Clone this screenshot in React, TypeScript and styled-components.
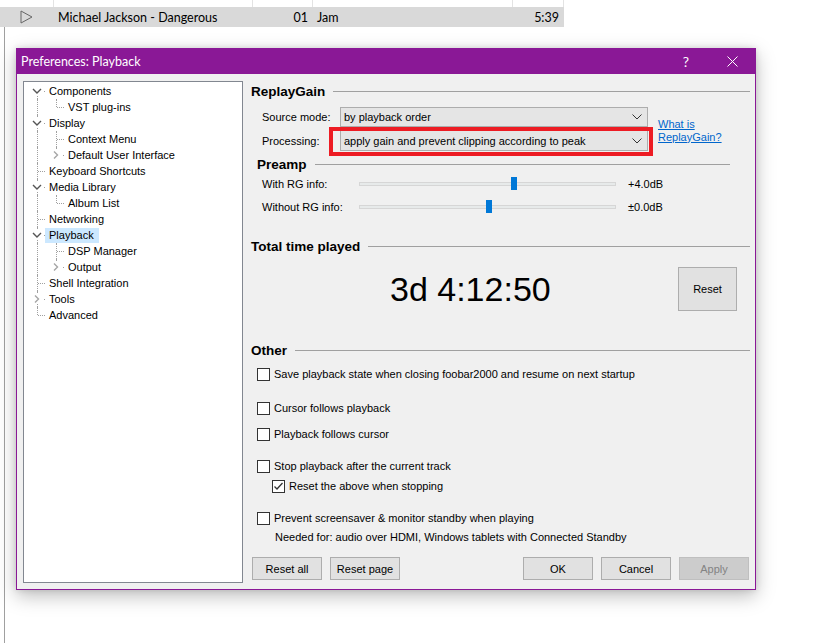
import React from "react";
import styled, { createGlobalStyle } from "styled-components";

const GlobalStyle = createGlobalStyle`
  html, body {
    margin: 0;
    padding: 0;
    background: #ffffff;
  }
  body {
    font-family: "Liberation Sans", Arial, sans-serif;
    font-size: 11px;
    color: #000;
  }
`;

const Desktop = styled.div`
  position: relative;
  width: 814px;
  height: 643px;
  overflow: hidden;
  background: #fff;
`;

/* ---------- playlist behind the dialog ---------- */

const Playlist = styled.div`
  display: flex;
  flex-direction: column;
  height: 100%;
`;

const PlaylistRow = styled.div<{ $playing?: boolean }>`
  display: grid;
  grid-template-columns: 54px 199px 60px 200px 51px;
  width: 564px;
  height: ${(p) => (p.$playing ? 20 : 7)}px;
  overflow: hidden;
  background: ${(p) => (p.$playing ? "#d9d9d9" : "#fff")};
  font-family: Lato, "Liberation Sans", sans-serif;
  font-size: 12.5px;
  color: #000;
`;

const PlaylistCell = styled.div<{ $align?: "start" | "end" | "center"; $divider?: boolean }>`
  display: flex;
  align-items: center;
  justify-content: ${(p) => p.$align ?? "start"};
  padding: 0 4px;
  border-right: 1px solid ${(p) => (p.$divider ? "#e3e3e3" : "transparent")};
  white-space: nowrap;
  overflow: hidden;
`;

const PlaylistRest = styled.div`
  flex: 1;
  margin-left: 4px;
  border-left: 1px solid #a0a0a0;
`;

/* ---------- dialog ---------- */

const Dialog = styled.section`
  position: absolute;
  left: 16px;
  top: 48px;
  width: 740px;
  height: 542px;
  box-sizing: border-box;
  border: 1px solid #8a1896;
  background: #f0f0f0;
  box-shadow: 0 6px 18px rgba(0, 0, 0, 0.26), 0 0 6px rgba(0, 0, 0, 0.12);
  display: flex;
  flex-direction: column;
`;

const TitleBar = styled.header`
  height: 25px;
  flex: none;
  background: #8a1896;
  color: #fff;
  display: flex;
  align-items: center;
  padding-left: 4px;
  font-family: Lato, "Liberation Sans", sans-serif;
  font-size: 12.5px;
`;

const Title = styled.span`
  flex: 1;
`;

const TitleButton = styled.span`
  width: 46px;
  height: 25px;
  display: flex;
  align-items: center;
  justify-content: center;
  font-size: 14px;
`;

const Body = styled.div`
  flex: 1;
  display: flex;
  gap: 8px;
  padding: 7px 5px 0 6px;
`;

/* ---------- tree ---------- */

const Tree = styled.ul`
  width: 220px;
  height: 502px;
  flex: none;
  box-sizing: border-box;
  margin: 0;
  padding: 1px 0 0 4px;
  list-style: none;
  background: #fff;
  border: 1px solid #828790;
`;

const TreeRow = styled.li`
  display: flex;
  height: 16px;
`;

const Guide = styled.span`
  width: 19px;
  flex: none;
  position: relative;
  &::before {
    content: "";
    position: absolute;
    left: 9px;
    top: 0;
    bottom: 0;
    border-left: 1px dotted #a0a0a0;
  }
`;

const Connector = styled.span<{ $first?: boolean; $last?: boolean }>`
  width: 17px;
  flex: none;
  position: relative;
  &::before {
    content: "";
    position: absolute;
    left: 9px;
    top: ${(p) => (p.$first ? 8 : 0)}px;
    ${(p) => (p.$last ? "height: 8px;" : "bottom: 0;")}
    border-left: 1px dotted #a0a0a0;
  }
  &::after {
    content: "";
    position: absolute;
    left: 10px;
    right: 0;
    top: 8px;
    border-top: 1px dotted #a0a0a0;
  }
`;

const Toggle = styled.span`
  position: absolute;
  left: 4px;
  top: 3px;
  width: 11px;
  height: 10px;
  background: #fff;
  z-index: 1;
  display: flex;
`;

const TreeLabel = styled.span<{ $selected?: boolean }>`
  align-self: center;
  height: 15px;
  line-height: 15px;
  padding: 0 5px 0 4px;
  white-space: nowrap;
  background: ${(p) => (p.$selected ? "#cce8ff" : "transparent")};
`;

/* ---------- right page ---------- */

const Page = styled.div`
  width: 499px;
  height: 499px;
  display: flex;
  flex-direction: column;
`;

const SectionHeader = styled.div<{ $top?: number; $height?: number; $indent?: number; $trim?: number }>`
  display: flex;
  align-items: center;
  height: ${(p) => p.$height ?? 20}px;
  margin-top: ${(p) => p.$top ?? 0}px;
  padding-left: ${(p) => p.$indent ?? 0}px;
  padding-right: ${(p) => p.$trim ?? 0}px;
  font-size: 13.5px;
  font-weight: bold;
  white-space: nowrap;
  &::after {
    content: "";
    flex: 1;
    margin-left: 8px;
    border-top: 1px solid #a0a0a0;
  }
`;

const GainGrid = styled.div`
  display: grid;
  grid-template-columns: 78px 308px auto;
  grid-template-rows: 20px 21px;
  row-gap: 3px;
  align-items: center;
  margin-top: 6px;
  padding-left: 11px;
`;

const Combo = styled.div`
  position: relative;
  height: 100%;
  box-sizing: border-box;
  border: 1px solid #adadad;
  background: #e5e5e5;
  display: flex;
  align-items: center;
  justify-content: space-between;
  padding: 0 5px 0 3px;
  white-space: nowrap;
`;

const Highlight = styled.span`
  position: absolute;
  left: -12px;
  right: -6px;
  top: -4px;
  bottom: -6px;
  border: 4px solid #ed1c24;
  pointer-events: none;
`;

const HelpLink = styled.a`
  grid-column: 3;
  grid-row: 1 / 3;
  align-self: center;
  margin: 3px 0 0 10px;
  color: #0066cc;
  text-decoration: underline;
  line-height: 13px;
`;

const SliderRow = styled.div<{ $top: number }>`
  display: grid;
  grid-template-columns: 97px 257px auto;
  align-items: center;
  height: 20px;
  margin-top: ${(p) => p.$top}px;
  padding-left: 11px;
`;

const Track = styled.div`
  position: relative;
  height: 4px;
  box-sizing: border-box;
  background: #e7eaea;
  border: 1px solid #d6d6d6;
`;

const Thumb = styled.span`
  position: absolute;
  top: -6px;
  width: 6px;
  height: 13px;
  background: #0078d7;
`;

const SliderValue = styled.span`
  margin-left: 12px;
`;

const TimeRow = styled.div`
  display: flex;
  align-items: center;
  height: 44px;
  margin-top: 11px;
  padding: 0 13px 0 139px;
`;

const TimeValue = styled.div`
  flex: 1;
  font-size: 34px;
  line-height: 1;
`;

const Button = styled.button<{ $width?: number; $height?: number }>`
  width: ${(p) => p.$width ?? 70}px;
  height: ${(p) => p.$height ?? 23}px;
  box-sizing: border-box;
  margin: 0;
  padding: 0;
  border: 1px solid #adadad;
  background: #e1e1e1;
  font: inherit;
  color: #000;
  &:disabled {
    background: #cccccc;
    border-color: #bfbfbf;
    color: #838383;
  }
`;

const CheckRow = styled.label<{ $top: number; $indent?: number }>`
  display: flex;
  align-items: center;
  gap: 4px;
  height: 18px;
  margin-top: ${(p) => p.$top}px;
  padding-left: ${(p) => 6 + (p.$indent ?? 0)}px;
  white-space: nowrap;
`;

const Box = styled.span`
  width: 13px;
  height: 13px;
  flex: none;
  box-sizing: border-box;
  border: 1px solid #333;
  background: #fff;
  display: flex;
  align-items: center;
  justify-content: center;
`;

const Note = styled.div`
  height: 18px;
  line-height: 18px;
  margin-top: 1px;
  padding-left: 24px;
  white-space: nowrap;
`;

const ButtonBar = styled.div`
  margin-top: auto;
  display: flex;
  gap: 8px;
  padding: 0 1px;
`;

const Spacer = styled.span`
  flex: 1;
`;

/* ---------- data ---------- */

type TreeItem = {
  label: string;
  level: 0 | 1;
  toggle?: "open" | "closed";
  last?: boolean;
  selected?: boolean;
};

const tree: TreeItem[] = [
  { label: "Components", level: 0, toggle: "open" },
  { label: "VST plug-ins", level: 1, last: true },
  { label: "Display", level: 0, toggle: "open" },
  { label: "Context Menu", level: 1 },
  { label: "Default User Interface", level: 1, toggle: "closed", last: true },
  { label: "Keyboard Shortcuts", level: 0 },
  { label: "Media Library", level: 0, toggle: "open" },
  { label: "Album List", level: 1, last: true },
  { label: "Networking", level: 0 },
  { label: "Playback", level: 0, toggle: "open", selected: true },
  { label: "DSP Manager", level: 1 },
  { label: "Output", level: 1, toggle: "closed", last: true },
  { label: "Shell Integration", level: 0 },
  { label: "Tools", level: 0, toggle: "closed" },
  { label: "Advanced", level: 0, last: true },
];

const checks = [
  { label: "Save playback state when closing foobar2000 and resume on next startup", top: 5 },
  { label: "Cursor follows playback", top: 16 },
  { label: "Playback follows cursor", top: 8 },
  { label: "Stop playback after the current track", top: 14 },
  { label: "Reset the above when stopping", top: 2, indent: 15, checked: true },
  { label: "Prevent screensaver & monitor standby when playing", top: 14 },
];

const sliders = [
  { label: "With RG info:", value: 4, text: "+4.0dB", top: 1 },
  { label: "Without RG info:", value: 0, text: "±0.0dB", top: 3 },
];

const Chevron = ({ open }: { open: boolean }) =>
  open ? (
    <svg width="11" height="10" viewBox="0 0 11 10">
      <polyline points="1,3 5,7 9,3" fill="none" stroke="#555" strokeWidth="1.4" />
    </svg>
  ) : (
    <svg width="11" height="10" viewBox="0 0 11 10">
      <polyline points="3,1.5 6.5,5 3,8.5" fill="none" stroke="#a6a6a6" strokeWidth="1.4" />
    </svg>
  );

const ComboArrow = () => (
  <svg width="10" height="6" viewBox="0 0 10 6">
    <polyline points="0.5,0.5 5,5 9.5,0.5" fill="none" stroke="#333" strokeWidth="1" />
  </svg>
);

const PlayIcon = () => (
  <svg width="13" height="14" viewBox="0 0 13 14">
    <polygon points="1,1 12,7 1,13" fill="none" stroke="#666" strokeWidth="1" />
  </svg>
);

const CloseIcon = () => (
  <svg width="11" height="11" viewBox="0 0 11 11">
    <path d="M0.5 0.5 L10.5 10.5 M10.5 0.5 L0.5 10.5" stroke="#fff" strokeWidth="1" />
  </svg>
);

const CheckMark = () => (
  <svg width="11" height="11" viewBox="0 0 11 11">
    <polyline points="1.5,5.5 4,8 9.5,2" fill="none" stroke="#333" strokeWidth="1.3" />
  </svg>
);

export default function App() {
  return (
    <Desktop>
      <GlobalStyle />
      <Playlist>
        <PlaylistRow>
          <PlaylistCell $divider />
          <PlaylistCell $divider />
          <PlaylistCell $divider />
          <PlaylistCell $divider />
          <PlaylistCell $divider />
        </PlaylistRow>
        <PlaylistRow $playing>
          <PlaylistCell $align="center">
            <PlayIcon />
          </PlaylistCell>
          <PlaylistCell>Michael Jackson - Dangerous</PlaylistCell>
          <PlaylistCell $align="end">01</PlaylistCell>
          <PlaylistCell>Jam</PlaylistCell>
          <PlaylistCell $align="end">5:39</PlaylistCell>
        </PlaylistRow>
        <PlaylistRest />
      </Playlist>

      <Dialog>
        <TitleBar>
          <Title>Preferences: Playback</Title>
          <TitleButton>?</TitleButton>
          <TitleButton>
            <CloseIcon />
          </TitleButton>
        </TitleBar>

        <Body>
          <Tree>
            {tree.map((item, i) => (
              <TreeRow key={item.label}>
                {item.level === 1 && <Guide />}
                <Connector $first={i === 0} $last={item.last}>
                  {item.toggle && (
                    <Toggle>
                      <Chevron open={item.toggle === "open"} />
                    </Toggle>
                  )}
                </Connector>
                <TreeLabel $selected={item.selected}>{item.label}</TreeLabel>
              </TreeRow>
            ))}
          </Tree>

          <Page>
            <SectionHeader>ReplayGain</SectionHeader>
            <GainGrid>
              <span>Source mode:</span>
              <Combo>
                <span>by playback order</span>
                <ComboArrow />
              </Combo>
              <HelpLink href="#">
                What is
                <br />
                ReplayGain?
              </HelpLink>
              <span>Processing:</span>
              <Combo>
                <span>apply gain and prevent clipping according to peak</span>
                <ComboArrow />
                <Highlight />
              </Combo>
            </GainGrid>

            <SectionHeader $top={4} $height={18} $indent={6} $trim={20}>
              Preamp
            </SectionHeader>
            {sliders.map((s) => (
              <SliderRow key={s.label} $top={s.top}>
                <span>{s.label}</span>
                <Track>
                  <Thumb style={{ left: `${((s.value + 20) / 40) * 251}px` }} />
                </Track>
                <SliderValue>{s.text}</SliderValue>
              </SliderRow>
            ))}

            <SectionHeader $top={19}>Total time played</SectionHeader>
            <TimeRow>
              <TimeValue>3d 4:12:50</TimeValue>
              <Button $width={59} $height={44}>
                Reset
              </Button>
            </TimeRow>

            <SectionHeader $top={29}>Other</SectionHeader>
            {checks.map((c) => (
              <CheckRow key={c.label} $top={c.top} $indent={c.indent}>
                <Box>{c.checked && <CheckMark />}</Box>
                {c.label}
              </CheckRow>
            ))}
            <Note>Needed for: audio over HDMI, Windows tablets with Connected Standby</Note>

            <ButtonBar>
              <Button>Reset all</Button>
              <Button>Reset page</Button>
              <Spacer />
              <Button>OK</Button>
              <Button>Cancel</Button>
              <Button disabled>Apply</Button>
            </ButtonBar>
          </Page>
        </Body>
      </Dialog>
    </Desktop>
  );
}
